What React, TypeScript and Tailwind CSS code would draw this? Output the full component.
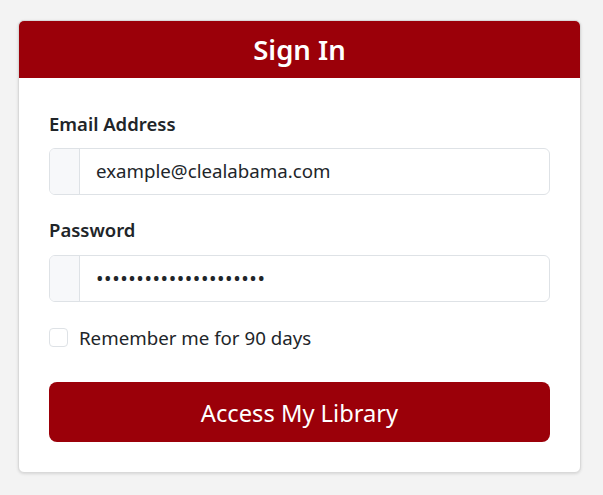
export default function App() {
  return (
    <div className="min-h-[495px] w-full bg-[#f3f3f3] px-[18px] pt-[20px] font-['Noto_Sans','Open_Sans',sans-serif] text-[#212529]">
      <div className="w-[563px] overflow-hidden rounded-[6px] border border-[#d9d9d9] bg-white shadow-[0_1px_3px_rgba(0,0,0,0.12)]">
        <div className="flex h-[57px] items-center justify-center bg-[#9b0009]">
          <h1 className="text-[27.5px] font-semibold text-white">Sign In</h1>
        </div>
        <form className="px-[30px] pt-[32px] pb-[30px]">
          <label className="mb-[10px] block text-[18.5px] leading-[28px] font-semibold">Email Address</label>
          <div className="flex h-[47px] overflow-hidden rounded-[6px] border border-[#dee2e6]">
            <span className="w-[30px] border-r border-[#dee2e6] bg-[#f7f8fa]" />
            <input
              className="flex-1 px-[16px] text-[18.7px] outline-none"
              defaultValue="example@clealabama.com"
            />
          </div>
          <label className="mt-[21px] mb-[11px] block text-[18.5px] leading-[28px] font-semibold">Password</label>
          <div className="flex h-[47px] overflow-hidden rounded-[6px] border border-[#dee2e6]">
            <span className="w-[30px] border-r border-[#dee2e6] bg-[#f7f8fa]" />
            <input
              type="password"
              className="flex-1 px-[16px] text-[20px] tracking-[0.55px] outline-none"
              defaultValue="*********************"
            />
          </div>
          <div className="mt-[22px] flex items-center gap-[11px]">
            <span className="h-[19px] w-[19px] rounded-[4px] border border-[#dee2e6] bg-white" />
            <span className="text-[18.7px] leading-[27px]">Remember me for 90 days</span>
          </div>
          <button
            type="button"
            className="mt-[31px] flex h-[60px] w-full items-center justify-center rounded-[8px] bg-[#9b0009] pt-[3px] text-[23.7px] text-white"
          >
            Access My Library
          </button>
        </form>
      </div>
    </div>
  )
}
